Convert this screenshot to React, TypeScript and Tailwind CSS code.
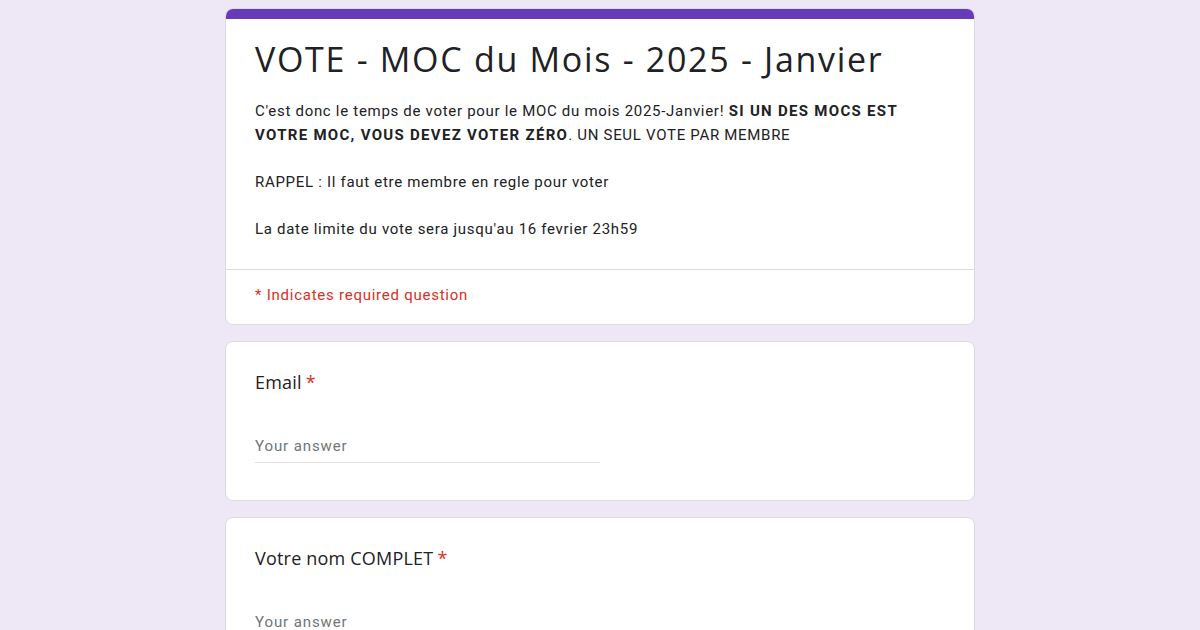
import React from "react";

const Required = () => <span className="text-[#d93025] ml-1">*</span>;

const Question = ({ label }: { label: string }) => (
  <div className="bg-white rounded-lg border border-[#dadce0] px-[29px] pt-[25px] pb-[37px]">
    <div className="text-[18px] leading-[30px] text-[#202124] font-['Open_Sans',sans-serif] tracking-[0.2px]">
      {label}
      <Required />
    </div>
    <div className="mt-[38px]">
      <div className="w-[345px] border-b border-[#e0e0e0] pb-[5px] text-[15px] leading-[22px] text-[#70757a] tracking-[0.9px]">
        Your answer
      </div>
    </div>
  </div>
);

export default function App() {
  return (
    <div className="min-h-[630px] bg-[#ede7f6] font-['Roboto',sans-serif] flex justify-center pt-2">
      <div className="w-[750px] flex flex-col gap-4">
        <div className="bg-white rounded-lg border border-[#dadce0] overflow-hidden">
          <div className="h-[10px] bg-[#673ab7]" />
          <div className="px-[29px] pt-[16px] pb-[28px] border-b border-[#dadce0]">
            <h1 className="text-[34px] leading-[48px] text-[#202124] font-['Open_Sans',sans-serif] tracking-[1.7px]">
              VOTE - MOC du Mois - 2025 - Janvier
            </h1>
            <div className="mt-[17px] text-[15px] leading-[23.5px] text-[#202124] tracking-[0.7px]">
              <p>
                C'est donc le temps de voter pour le MOC du mois 2025-Janvier!{" "}
                <b className="font-bold tracking-[1.3px]">SI UN DES MOCS EST VOTRE MOC, VOUS DEVEZ VOTER ZÉRO</b>. UN
                SEUL VOTE PAR MEMBRE
              </p>
              <p className="mt-[23.5px]">RAPPEL : Il faut etre membre en regle pour voter</p>
              <p className="mt-[23.5px]">La date limite du vote sera jusqu'au 16 fevrier 23h59</p>
            </div>
          </div>
          <div className="px-[29px] pt-[14px] pb-[18px] text-[15px] leading-[22px] text-[#d93025] tracking-[0.75px]">
            * Indicates required question
          </div>
        </div>
        <Question label="Email" />
        <Question label="Votre nom COMPLET" />
      </div>
    </div>
  );
}
